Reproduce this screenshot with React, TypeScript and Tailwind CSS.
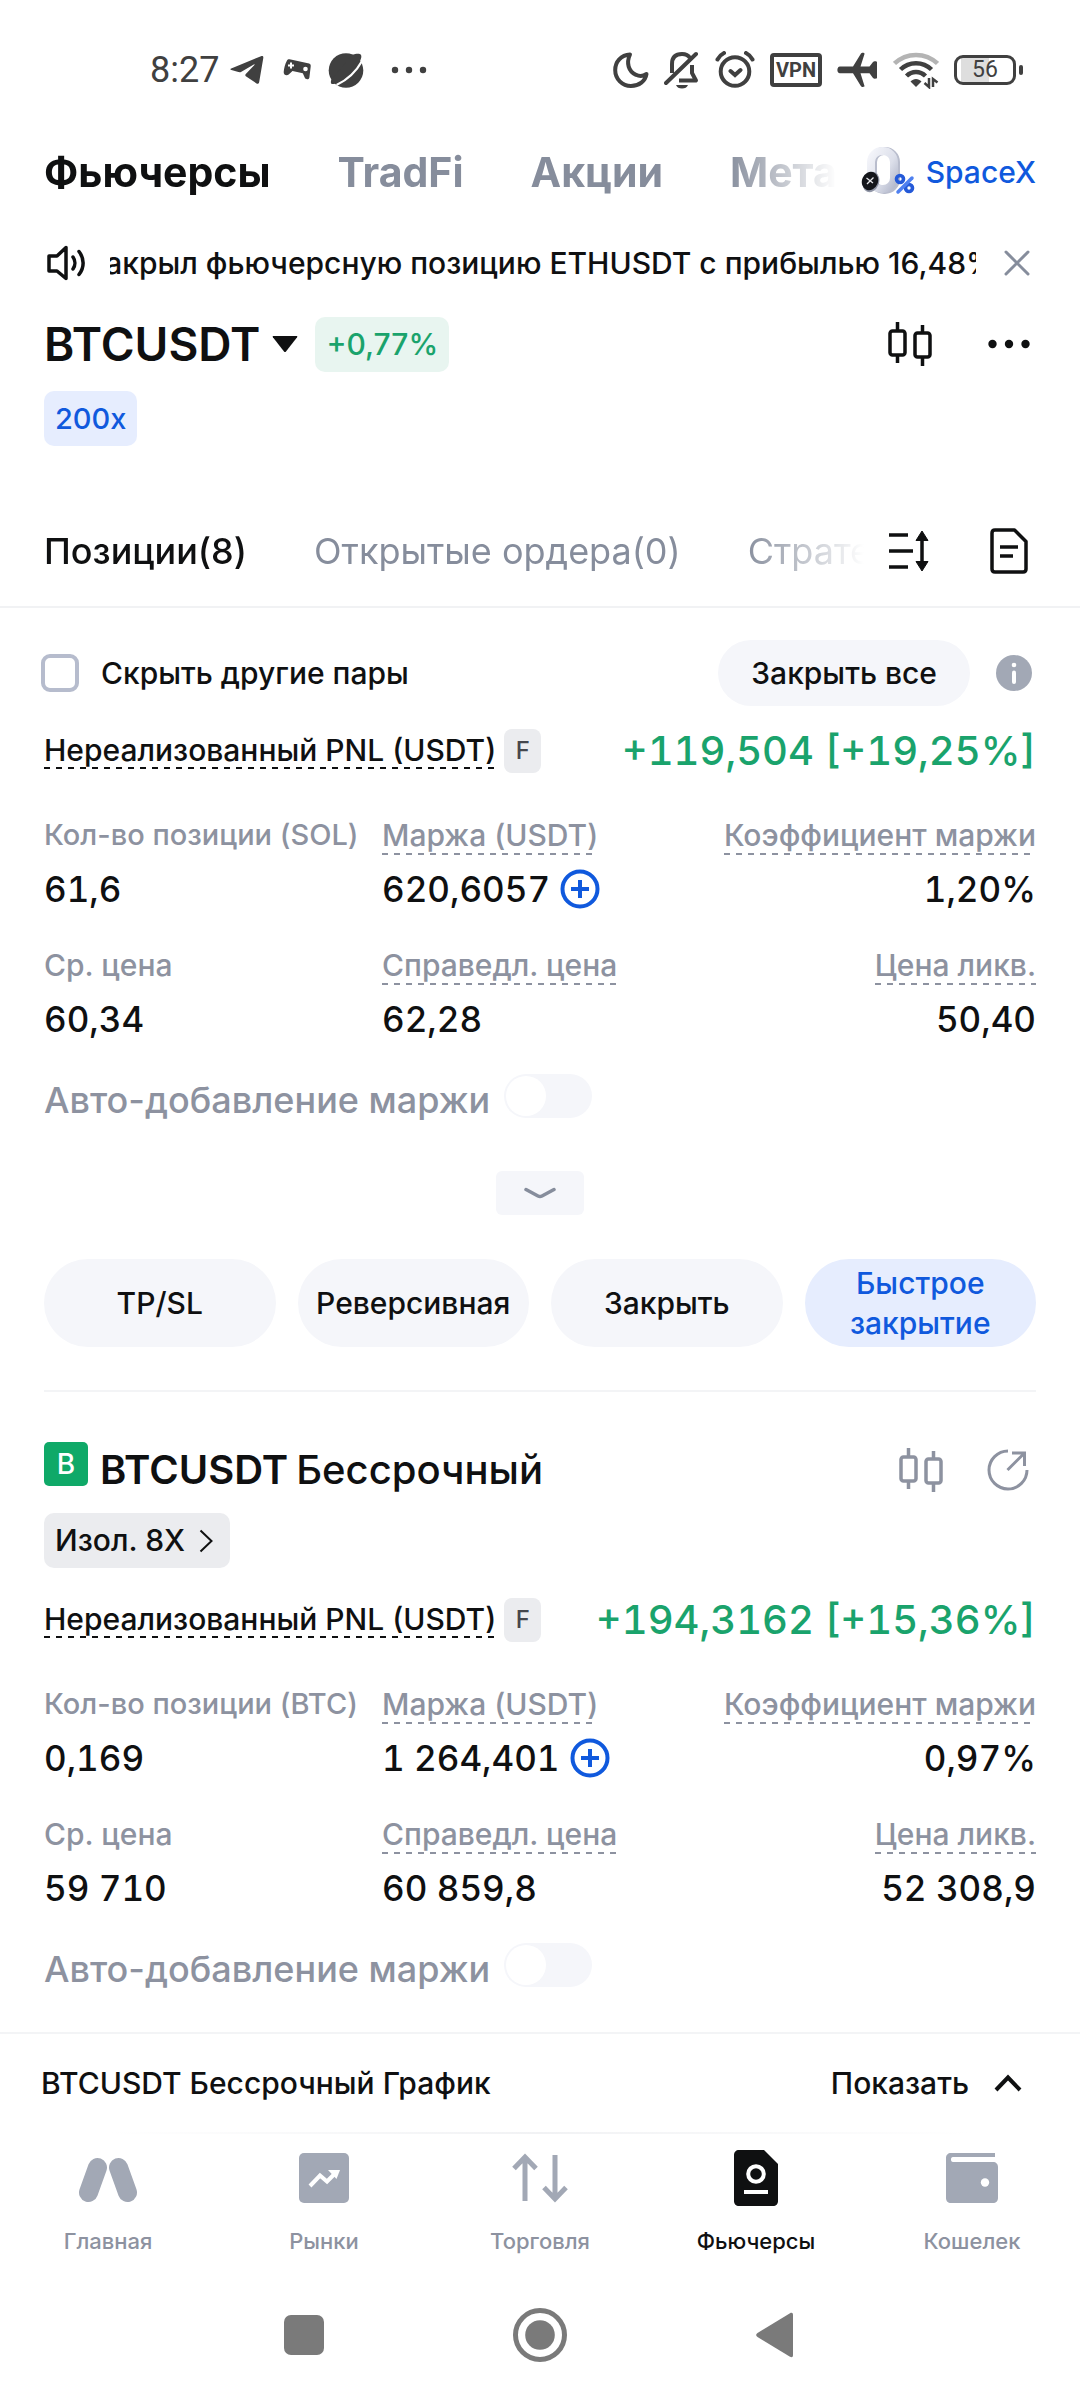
import { useState } from "react";
import type { ReactNode } from "react";

type Stat = {
    label: string;
    value: string;
    hint?: boolean;
    action?: boolean;
    compact?: boolean;
    align?: "right";
};

const MARKET_TABS = ["Фьючерсы", "TradFi", "Акции", "Металлы"];
const ORDER_TABS = ["Позиции(8)", "Открытые ордера(0)", "Стратегии(0)"];

const SOL_STATS: Stat[] = [
    { label: "Кол-во позиции (SOL)", value: "61,6", compact: true },
    { label: "Маржа (USDT)", value: "620,6057", hint: true, action: true },
    { label: "Коэффициент маржи", value: "1,20%", hint: true, align: "right" },
    { label: "Ср. цена", value: "60,34" },
    { label: "Справедл. цена", value: "62,28", hint: true },
    { label: "Цена ликв.", value: "50,40", hint: true, align: "right" },
];

const BTC_STATS: Stat[] = [
    { label: "Кол-во позиции (BTC)", value: "0,169", compact: true },
    { label: "Маржа (USDT)", value: "1 264,401", hint: true, action: true },
    { label: "Коэффициент маржи", value: "0,97%", hint: true, align: "right" },
    { label: "Ср. цена", value: "59 710" },
    { label: "Справедл. цена", value: "60 859,8", hint: true },
    { label: "Цена ликв.", value: "52 308,9", hint: true, align: "right" },
];

function StatusBar() {
    return (
        <div className="flex h-[140px] items-center justify-between pl-[150px] pr-[57px] font-normal text-[#404040]">
            <div className="flex items-center gap-[11px]">
                <span className="font-[Roboto,sans-serif] text-[36px] leading-[44px]">8:27</span>
                <svg width="34" height="30" viewBox="0 0 34 30" fill="currentColor">
                    <path d="M1.2 13.6 31 1.2c1.500-.6 2.600.1 2.300 1.700L29.200 27c-.3 1.800-1.600 2.200-3 1.200l-10-6.600c-1-.7-1.200-1.500-.4-2.500l8.600-9.200c.4-.5 0-.8-.6-.4L11.400 16.700c-1 .6-1.900.7-3 .4l-7-2C.2 14.700.1 14 1.200 13.600Z" />
                </svg>
                <svg width="42" height="34" viewBox="0 0 42 34">
                    <path d="M12 7.500c.5-1 1.400-1.500 2.600-1.300l19.500 4.400c1.300.4 1.800 1.300 1.600 2.800l-1.300 11c-.3 2.300-3.600 2.500-4.600.4l-2-4.500-10.300-2.400-3.800 3.700c-2 1.700-5.300.4-5-2.500.3-3.500 1.300-8 3.300-11.600Z" fill="currentColor" />
                    <path d="M16 9.500v6M13 12.500h6" stroke="#fff" strokeWidth="2" />
                    <circle cx="30.500" cy="16" r="2.300" fill="#fff" />
                </svg>
                <svg width="36" height="36" viewBox="0 0 36 36">
                    <circle cx="18" cy="18.500" r="17.300" fill="currentColor" />
                    <path d="M24 3c3.500-1.400 7.500-1.800 8.700-.6 1.200 1.200.8 4-1 7L11 30c-3 1.600-5.800 2.400-7.200 2-1-.4-1.200-2-.6-4Z" fill="currentColor" />
                    <path d="M8.500 33C19 28 28 20 34 9" fill="none" stroke="#fff" strokeWidth="2.200" />
                </svg>
                <svg width="54" height="36" viewBox="0 0 54 36" fill="currentColor">
                    <circle cx="20" cy="18" r="3.200" />
                    <circle cx="34" cy="18" r="3.200" />
                    <circle cx="48" cy="18" r="3.200" />
                </svg>
            </div>
            <div className="flex items-center gap-[15px]">
                <svg width="36" height="38" viewBox="0 0 36 38" fill="none" stroke="currentColor" strokeWidth="4" strokeLinejoin="round">
                    <path d="M17 3.500C8 4 2.200 11 2.200 19c0 9 7 16 15.800 16 8 0 14.500-5 15.500-12-3 2-7 2.500-10.500.8C15.500 20.500 13 12 17 3.500Z" />
                </svg>
                <svg width="36" height="38" viewBox="0 0 36 38">
                    <path d="M8 22V13C8 6 12 3 18 3c4 0 6.500 1.500 8 4M28 14v8l4 7.500H15" fill="none" stroke="currentColor" strokeWidth="4" strokeLinejoin="round" />
                    <path d="M12 34h12c-1 2.500-3 3.500-6 3.500S13 36.500 12 34Z" fill="currentColor" />
                    <path d="M2 32 32 3" stroke="currentColor" strokeWidth="4" strokeLinecap="round" />
                </svg>
                <svg width="40" height="38" viewBox="0 0 40 38" fill="none" stroke="currentColor" strokeWidth="4" strokeLinecap="round">
                    <circle cx="20" cy="20.500" r="14.300" />
                    <path d="M2.500 8.500c1.500-3 3.500-5 6.500-6.500M37.500 8.500C36 5.500 34 3.500 31 2M15.500 20l4.500 4 5.500-5" />
                </svg>
                <span className="flex h-[34px] w-[52px] items-center justify-center rounded-[4px] border-[4px] border-[#404040] font-[Roboto,sans-serif] text-[20px] leading-[20px] font-bold">
                    VPN
                </span>
                <svg width="41" height="36" viewBox="0 0 41 36" fill="currentColor">
                    <path d="M3 14.500h13L24 1.500c.6-1 3.800-.9 3.500.4l-4 12.600h9l3.500-4.600c.8-1 4-1 4 .2v15.600c0 1.200-3.200 1.200-4 .2l-3.500-4.600h-9l4 12.600c.3 1.300-2.900 1.400-3.500.4l-8-13H3c-3.500 0-3.500-6.800 0-6.800Z" />
                </svg>
                <svg width="46" height="38" viewBox="0 0 46 38" fill="none" strokeWidth="4.500">
                    <path d="M1.500 12.500c12-11.500 31-11.500 43 0" stroke="#b4b4b4" />
                    <path d="M7.500 18.500c8.500-8.500 22.500-8.500 31 0M13.500 25c5.500-5.300 13.500-5.300 19 0" stroke="currentColor" />
                    <path d="M23 36 17.500 30.500c3-3.500 8-3.500 11 0Z" fill="currentColor" />
                    <path d="M36 27v9l-4.500-4M40 36v-8l4.500 3.500" stroke="currentColor" strokeWidth="2.500" />
                </svg>
                <div className="flex items-center">
                    <span className="flex h-[30px] w-[62px] items-center justify-center rounded-[9px] border-[3px] border-[#404040] bg-[linear-gradient(90deg,#fff_4px,#dedede_4px,#dedede_32px,#fff_32px)] font-[Roboto,sans-serif] text-[23px] leading-[24px]">
                        56
                    </span>
                    <span className="ml-[3px] h-[10px] w-[4px] rounded-[2px] bg-[#404040]" />
                </div>
            </div>
        </div>
    );
}

function PromoIcon() {
    return (
        <svg width="55" height="50" viewBox="0 0 55 50">
            <defs>
                <linearGradient id="zero" x1="0" y1="0" x2="1" y2="1">
                    <stop offset="0" stopColor="#f4f5fa" />
                    <stop offset="0.6" stopColor="#dcdfea" />
                    <stop offset="1" stopColor="#b4b9cc" />
                </linearGradient>
            </defs>
            <rect x="12" y="4" width="23" height="39" rx="11" fill="none" stroke="#b9bdcd" strokeWidth="8" />
            <rect x="10" y="4" width="23" height="38" rx="11" fill="none" stroke="url(#zero)" strokeWidth="8" />
            <ellipse cx="10" cy="35" rx="8" ry="10.500" transform="rotate(22 10 35)" fill="#9297a8" />
            <ellipse cx="9" cy="34" rx="8" ry="9.500" transform="rotate(22 9 34)" fill="#14161b" />
            <path d="m5.500 31 6.500 5M12.500 30.500 6 37" stroke="#e8e8ec" strokeWidth="1.300" />
            <circle cx="39" cy="32" r="3.500" fill="none" stroke="#2459d8" strokeWidth="3.600" />
            <circle cx="48" cy="41" r="3.500" fill="none" stroke="#2459d8" strokeWidth="3.600" />
            <path d="M51 31 37 45" stroke="#4f80f0" strokeWidth="3.500" strokeLinecap="round" />
        </svg>
    );
}

function CandlesIcon() {
    return (
        <svg width="44" height="44" viewBox="0 0 44 44" fill="none" stroke="currentColor" strokeWidth="3.500">
            <rect x="2" y="9" width="15" height="24" rx="2.500" />
            <rect x="27" y="11" width="15" height="24" rx="2.500" />
            <path d="M9.500 0v9M9.500 33v8M34.500 3v8M34.500 35v9" />
        </svg>
    );
}

function Hint({ children }: { children: ReactNode }) {
    return (
        <span className="inline-block bg-[repeating-linear-gradient(90deg,currentColor_0_6px,transparent_6px_12px)] bg-[length:100%_2px] bg-bottom bg-no-repeat pb-[2px]">
            {children}
        </span>
    );
}

function PnlRow({ value }: { value: string }) {
    return (
        <div className="flex h-[44px] items-center justify-between">
            <div className="flex items-center gap-2 text-[30px] leading-[34px]">
                <Hint>Нереализованный PNL (USDT)</Hint>
                <span className="flex h-[44px] w-[37px] items-center justify-center rounded-[8px] bg-[#ebecef] text-[24px] text-[#45474d]">
                    F
                </span>
            </div>
            <span className="text-[40px] leading-[46px] text-[#1aa36c] tabular-nums">{value}</span>
        </div>
    );
}

function StatGrid({ stats }: { stats: Stat[] }) {
    return (
        <dl className="mt-[44px] grid grid-cols-[338px_1fr_1fr] gap-y-9">
            {stats.map((stat) => (
                <div key={stat.label} className={stat.align === "right" ? "text-right" : ""}>
                    <dt
                        className={`h-[38px] leading-[36px] whitespace-nowrap text-[#8d92a0] ${stat.compact ? "text-[29px]" : "text-[30px]"}`}
                    >
                        {stat.hint ? <Hint>{stat.label}</Hint> : stat.label}
                    </dt>
                    <dd className="mt-3 flex h-[44px] items-center gap-[10px] text-[35px] leading-[44px] tabular-nums">
                        <span className={stat.align === "right" ? "flex-1" : ""}>{stat.value}</span>
                        {stat.action && (
                            <button type="button" aria-label="Добавить маржу" className="text-[#1059dd]">
                                <svg width="40" height="40" viewBox="0 0 40 40" fill="none" stroke="currentColor" strokeWidth="4">
                                    <circle cx="20" cy="20" r="17.500" />
                                    <path d="M20 11v18M11 20h18" />
                                </svg>
                            </button>
                        )}
                    </dd>
                </div>
            ))}
        </dl>
    );
}

function AutoMargin() {
    const [enabled, setEnabled] = useState(false);

    return (
        <label className="mt-[33px] flex items-start gap-[14px] text-[36px] leading-[52px] text-[#8d92a0]">
            Авто-добавление маржи
            <input
                type="checkbox"
                role="switch"
                checked={enabled}
                onChange={(e) => setEnabled(e.target.checked)}
                className="h-[44px] w-[88px] appearance-none rounded-full bg-[#f5f6fa] p-[2px] before:block before:h-[40px] before:w-[40px] before:rounded-full before:bg-white checked:bg-[#1059dd] checked:before:ml-auto"
            />
        </label>
    );
}

function PositionActions() {
    const base = "flex h-[88px] items-center justify-center rounded-full text-[30px] leading-[40px]";

    return (
        <div className="mt-[44px] grid grid-cols-4 gap-[22px]">
            {["TP/SL", "Реверсивная", "Закрыть"].map((name) => (
                <button key={name} type="button" className={`${base} bg-[#f5f6fa]`}>
                    {name}
                </button>
            ))}
            <button type="button" className={`${base} bg-[#e6edfe] px-8 text-[#1059dd]`}>
                Быстрое закрытие
            </button>
        </div>
    );
}

const NAV_ITEMS: { label: string; icon: ReactNode; active?: boolean }[] = [
    {
        label: "Главная",
        icon: (
            <path d="M19.500 17.500 10.500 42.500M40.500 17.500 49.500 42.500" stroke="currentColor" strokeWidth="19" strokeLinecap="round" />
        ),
    },
    {
        label: "Рынки",
        icon: (
            <>
                <rect x="5" y="3" width="50" height="50" rx="5" />
                <path d="m16 36 10-10.500 7 6L42 22.500" fill="none" stroke="#fff" strokeWidth="4" />
                <path d="M34 20h12l-3.500 9Z" fill="#fff" />
            </>
        ),
    },
    {
        label: "Торговля",
        icon: (
            <path d="M15 51V7M4 18.500 15 7l11 11.500M45 5v44M34 37.500 45 49l11-11.500" fill="none" stroke="currentColor" strokeWidth="5" />
        ),
    },
    {
        label: "Фьючерсы",
        active: true,
        icon: (
            <>
                <path d="M13 0h25l14 14v37c0 3-2 5-5 5H13c-3 0-5-2-5-5V5c0-3 2-5 5-5Z" />
                <circle cx="30" cy="24" r="7.800" fill="none" stroke="#fff" strokeWidth="4" />
                <path d="M18 42h24" stroke="#fff" strokeWidth="4" />
            </>
        ),
    },
    {
        label: "Кошелек",
        icon: (
            <>
                <path d="M9 3h44v4H11c-1.500 0-2 1-2 2.500s.5 2.500 2 2.500h40c3 0 5 2 5 5v31c0 3-2 5-5 5H9c-3 0-5-2-5-5V8c0-3 2-5 5-5Z" />
                <circle cx="43" cy="32.500" r="4.200" fill="#fff" />
            </>
        ),
    },
];

export default function App() {
    const [hideOthers, setHideOthers] = useState(false);

    return (
        <div className="flex min-h-screen flex-col bg-white font-[Inter,sans-serif] font-medium text-[#0f1011]">
            <StatusBar />

            <nav className="flex h-[64px] items-center px-[44px]">
                <div className="flex min-w-0 flex-1 gap-[67px] overflow-hidden [mask-image:linear-gradient(90deg,#000_calc(100%-110px),transparent)]">
                    {MARKET_TABS.map((tab, i) => (
                        <button
                            key={tab}
                            type="button"
                            className={`text-[41px] leading-[56px] font-bold whitespace-nowrap ${i === 0 ? "" : "text-[#868d9c]"}`}
                        >
                            {tab}
                        </button>
                    ))}
                </div>
                <a href="#spacex" className="ml-[24px] flex items-center gap-[10px] text-[30px] leading-[36px] text-[#1059dd]">
                    <PromoIcon />
                    SpaceX
                </a>
            </nav>

            <div className="mt-8 flex h-[54px] items-center pr-[50px] pl-[46px]">
                <svg width="42" height="36" viewBox="0 0 42 36" fill="none" stroke="currentColor" strokeWidth="3.500" strokeLinejoin="round">
                    <path d="M3 11h8l9-8.500v31L11 26H3Z" />
                    <path d="M27 12c2.500 3.500 2.500 8.500 0 12M33 6.500c5.500 7 5.500 16 0 23" strokeLinecap="round" />
                </svg>
                <div className="ml-[22px] flex min-w-0 flex-1 justify-center overflow-hidden text-[30px] leading-[40px] whitespace-nowrap">
                    <span>закрыл фьючерсную позицию ETHUSDT с прибылью 16,48%</span>
                </div>
                <button type="button" aria-label="Скрыть" className="ml-[28px] text-[#868d9c]">
                    <svg width="26" height="26" viewBox="0 0 26 26" stroke="currentColor" strokeWidth="3" strokeLinecap="round">
                        <path d="m2 2 22 22M24 2 2 24" />
                    </svg>
                </button>
            </div>

            <div className="mt-[26px] flex h-[56px] items-center justify-between pr-[50px] pl-[44px]">
                <div className="flex items-center">
                    <button type="button" className="flex items-center gap-3 text-[46px] leading-[56px] font-semibold">
                        BTCUSDT
                        <svg width="26" height="18" viewBox="0 0 26 18" fill="currentColor">
                            <path d="M1.500 1h23c.8 0 1 .6.600 1.200L14 16.500c-.6.7-1.400.7-2 0L.9 2.200C.5 1.600.7 1 1.500 1Z" />
                        </svg>
                    </button>
                    <span className="ml-[17px] rounded-[10px] bg-[#e8f5f0] px-[11px] text-[30px] leading-[55px] text-[#1aa36c]">
                        +0,77%
                    </span>
                </div>
                <div className="flex items-center gap-[56px]">
                    <button type="button" aria-label="График">
                        <CandlesIcon />
                    </button>
                    <button type="button" aria-label="Ещё">
                        <svg width="42" height="44" viewBox="0 0 42 44" fill="currentColor">
                            <circle cx="4.500" cy="22" r="4.200" />
                            <circle cx="21" cy="22" r="4.200" />
                            <circle cx="37.500" cy="22" r="4.200" />
                        </svg>
                    </button>
                </div>
            </div>
            <div className="mt-[19px] flex px-[44px]">
                <button type="button" className="rounded-[10px] bg-[#e6edfe] px-[11px] text-[29px] leading-[55px] text-[#1059dd]">
                    200x
                </button>
            </div>

            <nav className="mt-[50px] flex h-[112px] items-center border-b-2 border-[#f1f2f4] pr-[52px] pl-[44px]">
                <div className="flex min-w-0 flex-1 gap-[67px] overflow-hidden [mask-image:linear-gradient(90deg,#000_calc(100%-120px),transparent)]">
                    {ORDER_TABS.map((tab, i) => (
                        <button
                            key={tab}
                            type="button"
                            className={`text-[36px] leading-[48px] whitespace-nowrap ${i === 0 ? "" : "font-normal text-[#868d9c]"}`}
                        >
                            {tab}
                        </button>
                    ))}
                </div>
                <div className="ml-[24px] flex items-center gap-[60px]">
                    <button type="button" aria-label="Сортировка">
                        <svg width="42" height="46" viewBox="0 0 42 46" fill="none" stroke="currentColor" strokeWidth="3.500">
                            <path d="M1 7h19M1 23h24M1 39h19M34 10v26" />
                            <path d="m34 3 6 9.500H28ZM34 43l6-9.500H28Z" fill="currentColor" strokeWidth="1" />
                        </svg>
                    </button>
                    <button type="button" aria-label="История">
                        <svg width="38" height="46" viewBox="0 0 38 46" fill="none" stroke="currentColor" strokeWidth="3.500" strokeLinejoin="round">
                            <path d="M5 2h19.500L36 13.500V41c0 2-1 3-3 3H5c-2 0-3-1-3-3V5c0-2 1-3 3-3Z" />
                            <path d="M10 19h18M10 28h13" />
                        </svg>
                    </button>
                </div>
            </nav>

            <main className="flex-1 px-[44px]">
                <div className="-ml-[3px] mt-8 flex h-[66px] items-center">
                    <label className="flex items-center gap-[22px] text-[30px] leading-[40px]">
                        <input
                            type="checkbox"
                            checked={hideOthers}
                            onChange={(e) => setHideOthers(e.target.checked)}
                            className="h-[38px] w-[38px] appearance-none rounded-[9px] border-[4px] border-[#b6bccd] checked:bg-[#1059dd]"
                        />
                        Скрыть другие пары
                    </label>
                    <button type="button" className="ml-auto rounded-full bg-[#f5f6fa] px-[33px] text-[30px] leading-[66px]">
                        Закрыть все
                    </button>
                    <button type="button" aria-label="Информация" className="ml-[26px] mr-[4px]">
                        <svg width="36" height="36" viewBox="0 0 36 36">
                            <circle cx="18" cy="18" r="18" fill="#a2a8b5" />
                            <circle cx="18" cy="10" r="2.300" fill="#fff" />
                            <path d="M18 17.500V27" stroke="#fff" strokeWidth="4" strokeLinecap="round" />
                        </svg>
                    </button>
                </div>

                <section className="border-b-2 border-[#f3f4f6] pt-[23px] pb-[43px]">
                    <PnlRow value="+119,504 [+19,25%]" />
                    <StatGrid stats={SOL_STATS} />
                    <AutoMargin />
                    <div className="mt-[45px] flex justify-center">
                        <button type="button" aria-label="Развернуть" className="flex h-[44px] w-[88px] items-center justify-center rounded-[6px] bg-[#f5f6fa] text-[#868d9c]">
                            <svg width="32" height="12" viewBox="0 0 32 12" fill="none" stroke="currentColor" strokeWidth="3.500" strokeLinecap="round" strokeLinejoin="round">
                                <path d="m2 2.500 12 6.500c1.500.8 2.500.8 4 0l12-6.500" />
                            </svg>
                        </button>
                    </div>
                    <PositionActions />
                </section>

                <section className="pt-[50px]">
                    <header className="flex h-[56px] items-center justify-between pr-[7px]">
                        <h2 className="flex items-start text-[40px] leading-[56px]">
                            <span className="mr-3 flex h-[44px] w-[44px] items-center justify-center rounded-[5px] bg-[#0fa968] text-[28px] text-white">
                                B
                            </span>
                            <span className="font-semibold">BTCUSDT</span>
                            <span className="ml-2">Бессрочный</span>
                        </h2>
                        <div className="flex items-center gap-[44px] text-[#8d92a0]">
                            <button type="button" aria-label="График">
                                <CandlesIcon />
                            </button>
                            <button type="button" aria-label="Поделиться">
                                <svg width="42" height="44" viewBox="0 0 42 44" fill="none" stroke="currentColor" strokeWidth="3">
                                    <path d="M21 3A19 19 0 1 0 40 22M20.500 22 37 5.500M25 5h12.500v13" />
                                </svg>
                            </button>
                        </div>
                    </header>
                    <button type="button" className="mt-[15px] mb-[30px] flex h-[55px] items-center gap-[14px] rounded-[10px] bg-[#ebecef] pr-[17px] pl-[11px] text-[30px] leading-[55px]">
                        Изол. 8X
                        <svg width="14" height="24" viewBox="0 0 14 24" fill="none" stroke="currentColor" strokeWidth="2">
                            <path d="m1.500 1.500 11 10.500-11 10.500" />
                        </svg>
                    </button>
                    <PnlRow value="+194,3162 [+15,36%]" />
                    <StatGrid stats={BTC_STATS} />
                    <AutoMargin />
                </section>
            </main>

            <footer>
                <div className="flex h-[100px] items-center justify-between border-t-2 border-[#f3f4f6] pr-[58px] pl-[41px] text-[30px] leading-[40px]">
                    <span>BTCUSDT Бессрочный График</span>
                    <button type="button" className="flex items-center gap-[25px]">
                        Показать
                        <svg width="28" height="18" viewBox="0 0 28 18" fill="none" stroke="currentColor" strokeWidth="4">
                            <path d="M2 16 14 3.500 26 16" />
                        </svg>
                    </button>
                </div>
                <div className="h-[2px] bg-[linear-gradient(90deg,#fff_10%,#f1f2f4_50%,#fff_90%)]" />
                <nav className="grid grid-cols-5 pt-[16px]">
                    {NAV_ITEMS.map((item) => (
                        <a
                            key={item.label}
                            href="#nav"
                            className={`flex flex-col items-center gap-5 text-[22px] leading-[30px] ${item.active ? "text-[#0f1011]" : "text-[#8d92a0]"}`}
                        >
                            <svg width="60" height="56" viewBox="0 0 60 56" fill="currentColor" className={item.active ? "" : "text-[#a2a8b5]"}>
                                {item.icon}
                            </svg>
                            {item.label}
                        </a>
                    ))}
                </nav>
                <div className="flex h-[144px] items-center justify-center gap-[189px] pt-[14px] text-[#7a7a7a]">
                    <button type="button" aria-label="Недавние">
                        <svg width="40" height="40" viewBox="0 0 40 40" fill="currentColor">
                            <rect width="40" height="40" rx="7" />
                        </svg>
                    </button>
                    <button type="button" aria-label="Домой">
                        <svg width="54" height="54" viewBox="0 0 54 54">
                            <circle cx="27" cy="27" r="24.500" fill="none" stroke="currentColor" strokeWidth="5" />
                            <circle cx="27" cy="27" r="14.800" fill="currentColor" />
                        </svg>
                    </button>
                    <button type="button" aria-label="Назад">
                        <svg width="40" height="46" viewBox="0 0 40 46" fill="currentColor">
                            <path d="M1.500 21 34 1.200c1.800-1 3-.4 3 1.500v40.600c0 1.900-1.200 2.500-3 1.500L1.500 25C-.3 23.900-.3 22.100 1.500 21Z" />
                        </svg>
                    </button>
                </div>
            </footer>
        </div>
    );
}
